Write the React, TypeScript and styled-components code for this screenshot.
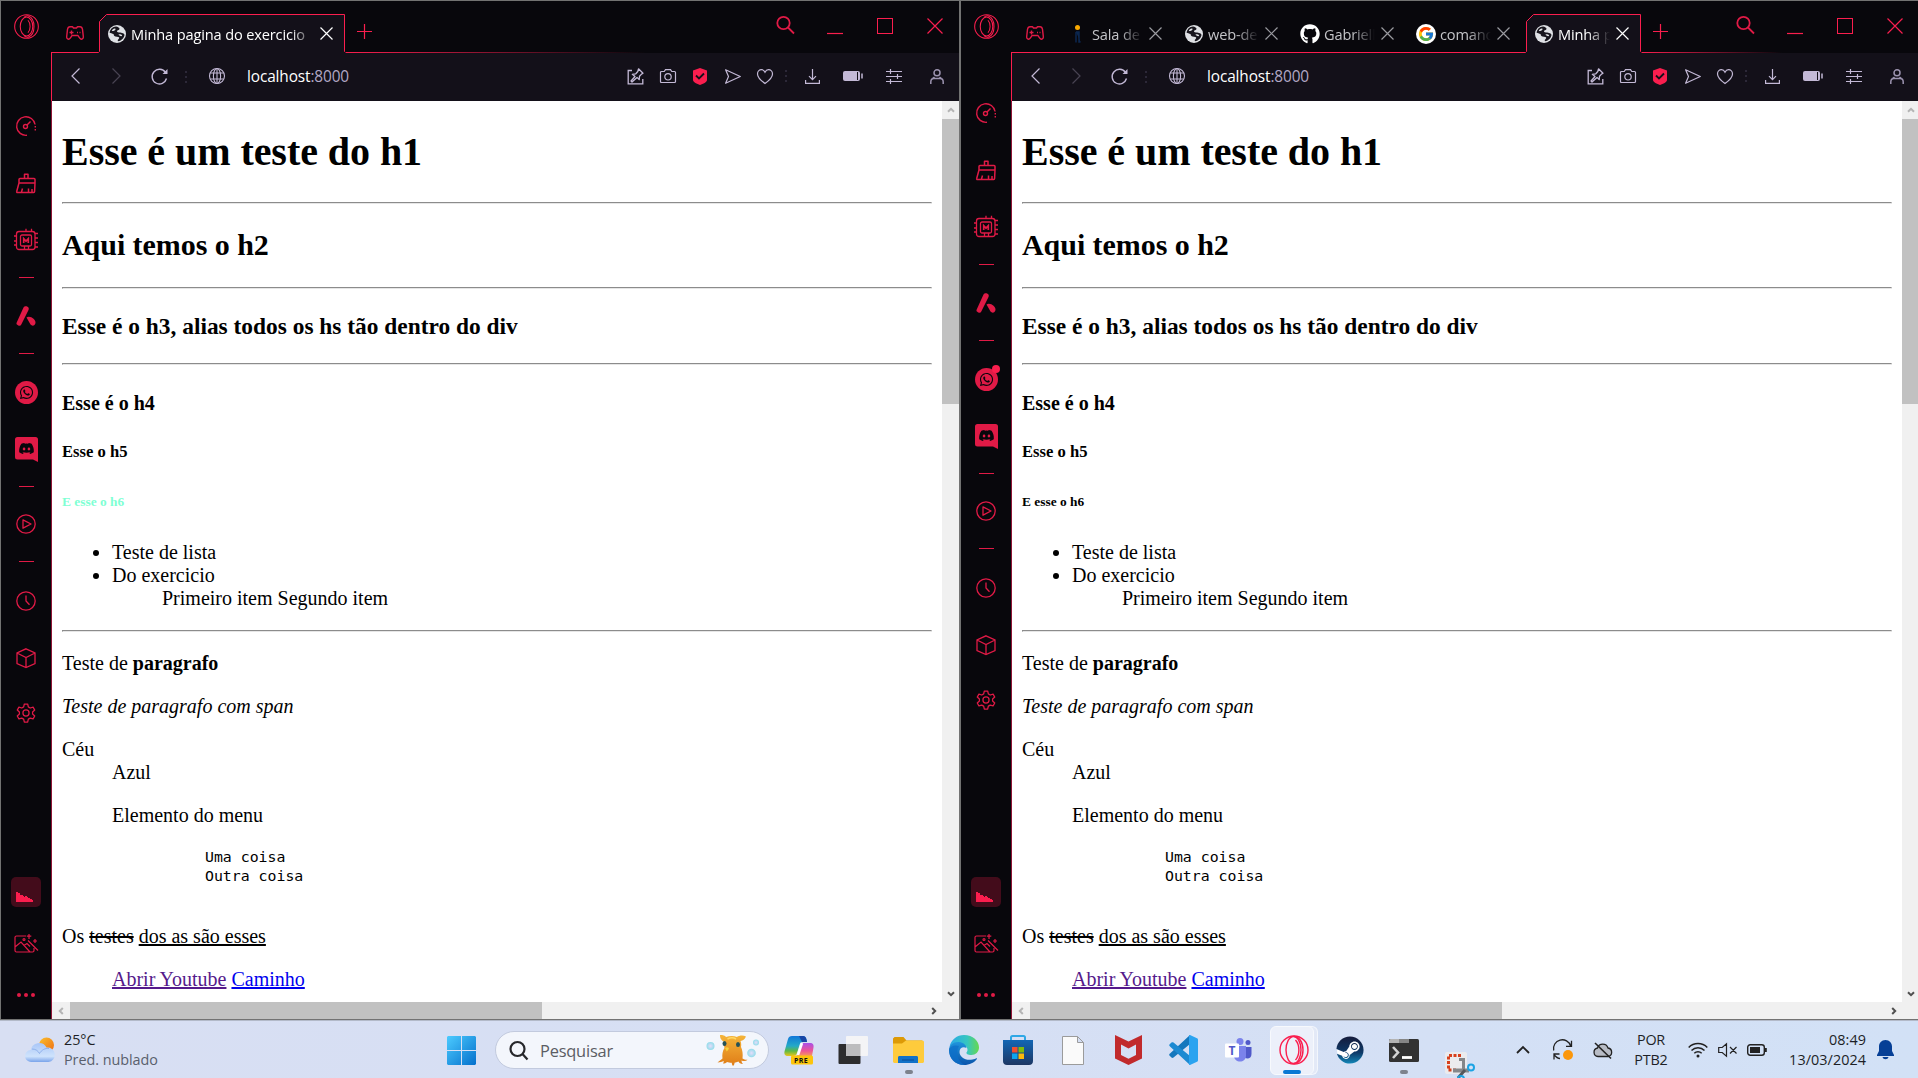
import React from 'react';
import styled, { createGlobalStyle } from 'styled-components';
import { FaDiscord, FaWhatsapp, FaGithub, FaSteam } from 'react-icons/fa6';
import { FcGoogle } from 'react-icons/fc';

const RED = '#fa1e4e';
const SIDE_RED = '#e01a46';
const LILAC = '#c3b9d6';
const UI = '"Open Sans", "Noto Sans", sans-serif';

const GlobalStyle = createGlobalStyle`
  * { box-sizing: border-box; }
  html, body { margin: 0; padding: 0; overflow: hidden; }
  body { font-family: ${UI}; }
  svg { display: block; flex: none; overflow: visible; }
`;

const Desktop = styled.div`
  width: 1918px;
  height: 1078px;
  overflow: hidden;
  display: flex;
  flex-direction: column;
  background: #d7dff3;
`;
const Windows = styled.div`
  display: grid;
  grid-template-columns: 960px 960px;
  height: 1020px;
  flex: none;
`;

/* ---------- browser window ---------- */
const WindowFrame = styled.section`
  display: grid;
  grid-template-columns: 50px 908px;
  width: 960px;
  height: 1020px;
  border: 1px solid #727272;
  background: #08070c;
  overflow: hidden;
`;
const Sidebar = styled.nav<{ $top: number }>`
  display: flex;
  flex-direction: column;
  align-items: center;
  height: 1018px;
  padding-top: 13px;
  & > .spacer { height: ${p => p.$top}px; flex: none; }
`;
const SideItem = styled.div<{ $h: number }>`
  height: ${p => p.$h}px;
  width: 50px;
  flex: none;
  display: flex;
  align-items: center;
  justify-content: center;
  color: ${SIDE_RED};
  position: relative;
`;
const SideDash = styled.div`
  width: 15px;
  height: 1px;
  background: ${SIDE_RED};
`;
const Push = styled.div`flex: 1;`;
const CornerBox = styled.div`
  width: 30px;
  height: 30px;
  border-radius: 5px;
  background: #430c1b;
  display: flex;
  align-items: flex-end;
  padding: 0 0 5px 5px;
`;
const WhatsDisc = styled.div`
  width: 23px;
  height: 23px;
  border-radius: 50%;
  background: ${SIDE_RED};
  color: #08070c;
  display: flex;
  align-items: center;
  justify-content: center;
`;
const Notice = styled.i`
  position: absolute;
  right: 11px;
  top: 17px;
  width: 8px;
  height: 8px;
  border-radius: 50%;
  background: ${RED};
`;
const Main = styled.div`
  display: flex;
  flex-direction: column;
  width: 908px;
`;
const TabBar = styled.div`
  display: flex;
  height: 52px;
  flex: none;
`;
const LineCell = styled.div<{ $w?: number; $line?: string }>`
  width: ${p => (p.$w ? p.$w + 'px' : 'auto')};
  flex: ${p => (p.$w ? 'none' : 1)};
  height: 52px;
  display: flex;
  background: ${p => p.$line || `linear-gradient(${RED}, ${RED})`} 0 51px / 100% 1px no-repeat;
`;
const PadIcon = styled.div`
  padding: 25px 0 0 15px;
`;
const PlusBox = styled.div`
  padding: 23px 0 0 11px;
  flex: 1;
`;
const TabBox = styled.div<{ $w: number; $active: boolean }>`
  width: ${p => p.$w}px;
  height: 52px;
  flex: none;
  display: flex;
  align-items: center;
  padding: 13px ${p => (p.$active ? 10 : 13)}px 0 ${p => (p.$w > 200 || p.$active ? 9 : 7)}px;
  position: relative;
  color: ${p => (p.$active ? '#fff' : '#c4c4c8')};
  background: ${p => (p.$active ? 'none' : `linear-gradient(${RED}, ${RED}) 0 51px / 100% 1px no-repeat`)};
`;
const Outline = styled.svg`
  position: absolute;
  left: 0;
  top: 13px;
`;
const FavSlot = styled.span`
  width: 20px;
  margin-left: -1px;
  display: flex;
  justify-content: center;
  position: relative;
`;
const TabTitle = styled.span`
  flex: 1;
  min-width: 0;
  margin: 0 1px 0 4px;
  overflow: hidden;
  white-space: nowrap;
  position: relative;
  font-size: 14.6px;
  line-height: 22px;
  letter-spacing: -0.15px;
  mask-image: linear-gradient(90deg, #000 calc(100% - 25px), transparent calc(100% - 2px));
`;
const Controls = styled.div`
  display: flex;
  width: 183px;
  flex: none;
  color: ${RED};
`;
const Control = styled.div<{ $w: number; $t: number; $gap?: number }>`
  width: ${p => p.$w}px;
  flex: none;
  margin-left: ${p => p.$gap || 0}px;
  padding-top: ${p => p.$t}px;
  display: flex;
  justify-content: center;
  align-items: flex-start;
`;
const Toolbar = styled.div`
  display: flex;
  height: 48px;
  flex: none;
  background: #131019;
  border-left: 1px solid ${RED};
  color: ${LILAC};
  align-items: center;
`;
const ToolCell = styled.div<{ $w: number; $dim?: boolean }>`
  width: ${p => p.$w}px;
  height: 48px;
  padding-bottom: 2px;
  flex: none;
  display: flex;
  align-items: center;
  justify-content: center;
  opacity: ${p => (p.$dim ? 0.3 : 1)};
`;
const Dots = styled.div`
  width: 2px;
  height: 13px;
  flex: none;
  background: repeating-linear-gradient(#2c2838 0 2px, transparent 2px 5px);
`;
const Address = styled.div`
  flex: 1;
  font-size: 15.4px;
  line-height: 22px;
  padding: 0 0 0 1px;
  letter-spacing: -0.12px;
  color: #b1a7c4;
  b { font-weight: 400; color: #fff; }
`;
const View = styled.div`
  display: grid;
  grid-template-columns: 890px 17px;
  grid-template-rows: 901px 17px;
  border-left: 1px solid #8e1535;
  background: #fff;
`;
const BarV = styled.div`
  background: #f0f0f0;
  display: flex;
  flex-direction: column;
`;
const BarH = styled.div`
  background: #f0f0f0;
  display: flex;
`;
const ArrowBox = styled.div<{ $dim?: boolean; $w: number; $h: number }>`
  width: ${p => p.$w}px;
  height: ${p => p.$h}px;
  display: flex;
  align-items: center;
  justify-content: center;
  color: ${p => (p.$dim ? '#b4b4b4' : '#505050')};
`;
const Thumb = styled.div<{ $w: number; $h: number }>`
  width: ${p => p.$w}px;
  height: ${p => p.$h}px;
  background: #c1c1c1;
`;

/* ---------- web page ---------- */
const Page = styled.article<{ $h6: string }>`
  display: flow-root;
  font-family: "Liberation Serif", "Times New Roman", serif;
  font-size: 20px;
  line-height: normal;
  color: #000;
  padding: 0 10px;
  height: 901px;
  overflow: hidden;
  h1 { font-size: 40px; margin: 26.8px 0; letter-spacing: -0.05px; }
  h2 { font-size: 30px; margin: 24.9px 0; letter-spacing: -0.05px; }
  h3 { font-size: 23.4px; margin: 23.4px 0; }
  h4 { font-size: 20px; margin: 26.6px 0; }
  h5 { font-size: 16.6px; margin: 27.7px 0; }
  h6 { font-size: 13.4px; margin: 31.2px 0; color: ${p => p.$h6}; }
  hr { margin: 10px 0; border: 1px solid; border-color: #8c8c8c #e6e6e6 #e6e6e6 #8c8c8c; }
  ul, ul ul { margin: 0; padding-left: 50px; }
  & > ul { margin: 20px 0; }
  p { margin: 20px 0; }
  dl { margin: 20px 0; }
  dd { margin: 0 0 0 50px; }
  menu { margin: 20px 0; padding-left: 50px; }
  pre {
    margin: 21px 0 20px 43px;
    padding-left: 50px;
    font: 14.85px/19px "DejaVu Sans Mono", monospace;
  }
  u, s, a { text-decoration-thickness: 2px; }
`;
const Link = styled.a<{ $visited?: boolean }>`
  color: ${p => (p.$visited ? '#551a8b' : '#0000ee')};
  text-decoration: underline;
`;

/* ---------- taskbar ---------- */
const Taskbar = styled.footer`
  height: 58px;
  flex: none;
  display: flex;
  align-items: center;
  padding-top: 2px;
  background: linear-gradient(90deg, #d8dff3, #d6dff4 50%, #d2e1f6);
  box-shadow: inset 0 1px #b3bac9;
  color: #1d1f26;
`;
const Weather = styled.div`
  width: 447px;
  flex: none;
  display: flex;
  align-items: center;
  padding-left: 25px;
  gap: 8px;
`;
const Stack = styled.div<{ $align?: string; $w?: number; $ls?: number }>`
  display: flex;
  flex-direction: column;
  text-align: ${p => p.$align || 'left'};
  width: ${p => (p.$w ? p.$w + 'px' : 'auto')};
  flex: none;
  font-size: 14.4px;
  line-height: 20px;
  letter-spacing: ${p => p.$ls || 0}px;
  white-space: nowrap;
  em { font-style: normal; color: #5a5f6d; }
`;
const Search = styled.div`
  width: 274px;
  height: 38px;
  flex: none;
  margin: 0 0 0 19px;
  border-radius: 19px;
  background: #f3f6fc;
  border: 1px solid #c2cade;
  display: flex;
  align-items: center;
  padding: 0 8px 0 13px;
  font-size: 16.4px;
  letter-spacing: -0.2px;
  color: #5b5d64;
  span { flex: 1; padding-left: 12px; }
`;
const TaskCell = styled.div<{ $w: number }>`
  width: ${p => p.$w}px;
  height: 58px;
  flex: none;
  display: flex;
  align-items: center;
  justify-content: center;
  position: relative;
`;
const Mark = styled.i<{ $on?: boolean }>`
  position: absolute;
  top: 49px;
  left: 50%;
  width: ${p => (p.$on ? 18 : 8)}px;
  height: 4px;
  margin-left: ${p => (p.$on ? -11 : -4)}px;
  border-radius: 2px;
  background: ${p => (p.$on ? '#0a78d4' : '#7d828d')};
`;
const ActiveTile = styled.div`
  width: 44px;
  height: 49px;
  margin-right: 4px;
  border-radius: 6px;
  background: #ecf0fa;
  border: 1px solid #f7f9fd;
  box-shadow: 4px 0 0 -1px #e3e9f7, 4px 0 0 0 #f3f6fc;
  display: flex;
  align-items: center;
  justify-content: center;
  padding-left: 3px;
`;
const Snip = styled.div`
  padding: 32px 0 0 1px;
`;
const Tray = styled.div`
  display: flex;
  align-items: center;
  margin-left: 14px;
`;

/* ---------- icons ---------- */
type SvgProps = { w: number; h?: number; vb?: string; sw?: number; c?: string; children: React.ReactNode };
const Ico = ({ w, h = w, vb, sw = 1.2, c = 'currentColor', children }: SvgProps) => (
  <svg width={w} height={h} viewBox={vb || `0 0 ${w} ${h}`} fill="none" stroke={c} strokeWidth={sw}>
    {children}
  </svg>
);

const OperaRing = ({ s, sw = 1.1 }: { s: number; sw?: number }) => (
  <Ico w={s} vb="0 0 26 26" sw={sw} c={RED}>
    <circle cx="13" cy="13" r="12.300" />
    <ellipse cx="13" cy="13" rx="6.500" ry="9.800" />
    <path d="M10.500 3.500C12 2 13.500 1.500 15 2c3.500 1.300 5.800 5.500 5.800 11S18.500 22.700 15 24c-1.500.5-3 0-4.500-1.500M14.500 6.500c3 3 3 10 0 13" />
  </Ico>
);
const OperaTask = () => (
  <Ico w={30} vb="0 0 30 30" sw={1.4} c={RED}>
    <circle cx="15" cy="15" r="14" />
    <ellipse cx="14.500" cy="15" rx="7.500" ry="13.500" />
    <path d="M15 1.500c5 0 9 5.500 9 13.500s-4 13.500-9 13.500M16.500 5c4.500 5 4.500 15 0 20" />
  </Ico>
);
const Gauge = () => (
  <Ico w={20} sw={1.4}>
    <path d="M11 19.300A9.300 9.300 0 1 1 19.100 8.500" />
    <path d="M19.300 10v6" strokeDasharray="1.500 1.500" />
    <circle cx="9.500" cy="10.500" r="2" />
    <path d="m11 9 3.500-3.500" />
  </Ico>
);
const Broom = () => (
  <Ico w={20} sw={1.5}>
    <path strokeLinejoin="round" d="M8.500 5.500V1.200h3.500v4.300M3 10V6.500c0-.7.3-1 1-1h14c.7 0 1 .3 1 1V10M3 10h16l-.4 8.500c0 .7-.4 1-1 1H1.500c-.7 0-1-.4-.8-1zM5.500 19l1-3.500M12.500 19v-3.500M16 19v-3" />
  </Ico>
);
const Chip = () => (
  <Ico w={24} sw={1.3}>
    <rect x="2.500" y="3.500" width="18.500" height="18" rx="2.500" />
    <rect x="6.500" y="7" width="11" height="11" rx="1.500" />
    <path d="M9.700 15v-4.300l2.300 2.500 2.300-2.500V15" strokeWidth="1.700" />
    <path d="M12 .8v3M17.500.8v3M0 8h3M0 13h3M0 17h3M21 5.500h3M21 10h3M21 14.500h3M21 19h3M10.500 18v3.500M14.500 18v3.500" />
  </Ico>
);
const AShape = () => (
  <Ico w={20} sw={0}>
    <path fill="currentColor" d="M7.500 1.500C8.300.2 10 0 11.500.700c1.300.7 1.600 1.900 1 3.300L5.300 18.500c-.6 1.200-1.600 1.600-3 .9C.7 18.700 0 17.800.7 16.500zM10.500 11.500c3.500-2.300 9.500 1.800 9 5.500-.4 2.400-3.200 3.700-5 1.500z" />
  </Ico>
);
const Play = () => (
  <Ico w={20} sw={1.3}>
    <circle cx="10" cy="10" r="9.200" />
    <path d="m7 5.800 8 4.200-8 4.200z" strokeLinejoin="round" />
  </Ico>
);
const Clock = () => (
  <Ico w={20} sw={1.3}>
    <circle cx="10" cy="10" r="9.200" />
    <path d="M10 4.500V10l3.500 3.800" />
  </Ico>
);
const Cube = () => (
  <Ico w={20} sw={1.3}>
    <path d="M10 .8 19 5v10.500L10 19.600 1 15.500V5zM1 5l9 4.500L19 5M10 9.500v10" />
  </Ico>
);
const Gear = () => (
  <Ico w={20} vb="0 0 24 24" sw={1.5}>
    <path strokeLinejoin="round" d="M10 1.200h4l.8 3.500 2.300 1.300 3.400-1 2 3.500-2.600 2.400v2.300l2.600 2.400-2 3.500-3.400-1-2.300 1.300-.8 3.400h-4l-.8-3.400-2.300-1.300-3.400 1-2-3.500 2.600-2.400v-2.300L1.500 8.500l2-3.500 3.400 1 2.300-1.300z" />
    <circle cx="12" cy="12" r="3.700" />
  </Ico>
);
const MagicImage = () => (
  <Ico w={24} h={20} sw={1.2}>
    <path d="M12 3H2.500C1.500 3 1 3.500 1 4.500v13c0 1 .5 1.500 1.500 1.500h16c1 0 1.500-.5 1.500-1.500V15M1 14l6-5 9 10M10 12.500l3-2 3 3" />
    <circle cx="10" cy="6.500" r="1" />
    <path d="M14 7.500 24 17.500M15 1v5M12.800 3.200h4.500M21 6v4M19 8h4" />
  </Ico>
);
const DiscordTile = () => (
  <svg width="23" height="25" viewBox="0 0 23 25">
    <path fill={SIDE_RED} d="M2.500 0h18A2.500 2.500 0 0 1 23 2.500V25l-5-2.500H2.500A2.500 2.500 0 0 1 0 20V2.500A2.500 2.500 0 0 1 2.500 0z" />
    <FaDiscord x="3.500" y="3.500" size={16} color="#08070c" />
  </svg>
);
const Gamepad = () => (
  <Ico w={18} h={14} sw={1.4} c={SIDE_RED}>
    <path d="M4 .8h2.500l1 1.200h3l1-1.200H14c1.500 0 2.200 1 2.500 2.500l.8 7c.2 1.800-.6 2.900-1.800 2.900-1.300 0-2-1.200-3.500-3.700H6C4.500 12 3.800 13.200 2.500 13.200 1.300 13.200.5 12.100.7 10.300l.8-7C1.800 1.800 2.500.8 4 .8z" strokeLinejoin="round" />
    <path d="M3.500 6.500h4M5.500 4.500v4M11 6.500h1M13.500 6.500h1" />
  </Ico>
);
const Cross = ({ s, c, sw = 1.2 }: { s: number; c?: string; sw?: number }) => (
  <Ico w={s} sw={sw} c={c}>
    <path d={`M.5.5 ${s - 0.5} ${s - 0.5}M${s - 0.5}.5.5 ${s - 0.5}`} />
  </Ico>
);
const EarthFav = () => (
  <svg width="18" height="18" viewBox="0 0 18 18">
    <circle cx="9" cy="9" r="9" fill="#dfe1e5" />
    <path fill="#17151d" d="M8 1.500c2 .3 3.500 1.300 3.500 2.300 0 1.200-1.500 1.200-2.300 2-.7.700.1 1.500 1.800 1.600 3 .2 5.500.600 5.500 2.600-.7 3.500-3.500 6-6.500 6.300-.8-1 .3-2 1-2.800.8-1-.3-1.700-2-1.700-2.500 0-3.300-1-3.300-2.500C4.200 8.500 2.500 8 1.500 7.500 2.200 4.200 4.500 1.800 8 1.500z" />
    <path fill="#dfe1e5" d="M7 3.500c1 .2.500 1.500-.5 2S4.300 6.300 3.800 6C4.200 4.500 5.700 3.300 7 3.500zM11 9.200c1.700 0 3 .4 3.200 1.200-.5 1.200-1.700.8-2.400.3-.8-.4-1.800-1.300-.8-1.500z" />
  </svg>
);
const InfoFav = () => (
  <svg width="18" height="20" viewBox="0 0 18 20">
    <circle cx="8.500" cy="3.500" r="2.500" fill="#f9a800" />
    <path d="M7 8h3v10h1.500M7 8v10.500" stroke="#0b2750" strokeWidth="1.500" fill="#0b2750" />
  </svg>
);
const GitFav = () => <FaGithub size={20} color="#fff" />;
const GoogleFav = () => (
  <svg width="20" height="20" viewBox="0 0 20 20">
    <circle cx="10" cy="10" r="10" fill="#fff" />
    <FcGoogle x="1.500" y="1.500" size={17} />
  </svg>
);

type ArrowDir = 'up' | 'down' | 'left' | 'right';
const rot: Record<ArrowDir, number> = { up: 0, right: 90, down: 180, left: 270 };
const Chevron = ({ dir }: { dir: ArrowDir }) => (
  <svg width="8" height="8" viewBox="0 0 8 8">
    <path transform={`rotate(${rot[dir]} 4 4)`} d="M1 5.800 4 2.800l3 3" fill="none" stroke="currentColor" strokeWidth="2" />
  </svg>
);

/* ---------- window parts ---------- */
type TabInfo = { title: string; icon: React.ReactNode; width: number; active?: boolean };

const Tab = ({ title, icon, width, active = false }: TabInfo) => (
  <TabBox $w={width} $active={active}>
    {active && (
      <Outline width={width} height={39} viewBox={`0 0 ${width} 39`}>
        <path d={`M-1 39V38.500H.5V7.500L7.500.500H${width - 1.5}V38.500H${width}V39z`} fill="#131019" />
        <path
          d={`M-.5 38.500L.5 37.500V7.500L7.500.500H${width - 1.5}V37.500L${width - 0.5} 38.500`}
          fill="none"
          stroke={RED}
        />
      </Outline>
    )}
    <FavSlot>{icon}</FavSlot>
    <TabTitle>{title}</TabTitle>
    <FavSlot>
      <Cross s={13} c={active ? '#fff' : '#9a9aa0'} />
    </FavSlot>
  </TabBox>
);

const SideIcons = ({ top, notice }: { top: number; notice: boolean }) => (
  <Sidebar $top={top}>
    <OperaRing s={25} />
    <div className="spacer" />
    <SideItem $h={57}><Gauge /></SideItem>
    <SideItem $h={57}><Broom /></SideItem>
    <SideItem $h={58}><Chip /></SideItem>
    <SideItem $h={17}><SideDash /></SideItem>
    <SideItem $h={60}><AShape /></SideItem>
    <SideItem $h={15}><SideDash /></SideItem>
    <SideItem $h={62}>
      <WhatsDisc><FaWhatsapp size={15} /></WhatsDisc>
      {notice && <Notice />}
    </SideItem>
    <SideItem $h={52}><DiscordTile /></SideItem>
    <SideItem $h={22}><SideDash /></SideItem>
    <SideItem $h={54}><Play /></SideItem>
    <SideItem $h={21}><SideDash /></SideItem>
    <SideItem $h={57}><Clock /></SideItem>
    <SideItem $h={57}><Cube /></SideItem>
    <SideItem $h={54}><Gear /></SideItem>
    <Push />
    <SideItem $h={50}>
      <CornerBox>
        <svg width="18" height="10" viewBox="0 0 18 10">
          <path fill={RED} d="M0 0h2v1h2v2h3v1h1v1h1V4h2v1h1v1h2v1h2v1h1v2H0z" />
        </svg>
      </CornerBox>
    </SideItem>
    <SideItem $h={52}><MagicImage /></SideItem>
    <SideItem $h={50}>
      <svg width="18" height="6" viewBox="0 0 18 6" fill={SIDE_RED}>
        <circle cx="2" cy="4" r="2" /><circle cx="9" cy="4" r="2" /><circle cx="16" cy="4" r="2" />
      </svg>
    </SideItem>
  </Sidebar>
);

const NavTools = () => (
  <Toolbar>
    <ToolCell $w={47}><Ico w={9} h={16}><path d="M8.500.5 1 8l7.500 7.500" /></Ico></ToolCell>
    <ToolCell $w={34} $dim><Ico w={9} h={16}><path d="M.5.5 8 8 .5 15.500" /></Ico></ToolCell>
    <ToolCell $w={52}>
      <Ico w={17} sw={1.4}>
        <path d="M15.500 10.500A7.300 7.300 0 1 1 14.500 4.500" />
        <path d="M16.500 1v5h-5z" fill="currentColor" stroke="none" />
      </Ico>
    </ToolCell>
    <Dots />
    <ToolCell $w={59}>
      <Ico w={16} sw={1.1}>
        <circle cx="8" cy="8" r="7.500" />
        <ellipse cx="8" cy="8" rx="3.600" ry="7.500" />
        <path d="M8 .5v15M1.200 5h13.600M1.200 11h13.600" />
      </Ico>
    </ToolCell>
    <Address><b>localhost</b>:8000</Address>
    <ToolCell $w={32}>
      <Ico w={17} sw={1.3}>
        <path d="M5 2.500H1.200v13.300h14.600V11" />
        <path d="m11.500.8 4.500 4.500-1.500.8-2 2.200-.3 3.300-2.200-2.200L5 14l-1-1 4-4.500-2.700-2.200 3.500-.5 2-2.300z" strokeLinejoin="round" />
      </Ico>
    </ToolCell>
    <ToolCell $w={33}>
      <Ico w={16} h={14} sw={1.2}>
        <path d="M1.500 2.500h2.700L5.500.600h5l1.300 1.900h2.700c.6 0 1 .3 1 1v9c0 .6-.4 1-1 1h-13c-.6 0-1-.4-1-1v-9c0-.7.400-1 1-1z" />
        <circle cx="8" cy="7.800" r="3.200" />
      </Ico>
    </ToolCell>
    <ToolCell $w={32}>
      <svg width="14" height="17" viewBox="0 0 14 17">
        <path fill={RED} d="M7 0l7 2.500V12c0 2-4 4-7 5-3-1-7-3-7-5V2.500z" />
        <path d="m3 7.500 3 3 5-5" fill="none" stroke="#131019" strokeWidth="1.800" />
      </svg>
    </ToolCell>
    <ToolCell $w={33}><Ico w={16} h={15}><path d="M.6.8 15.300 7.500.600 14.200 3.500 7.500z" strokeLinejoin="round" /></Ico></ToolCell>
    <ToolCell $w={31}>
      <Ico w={16} h={15}><path d="M8 14.500C4.500 12 .5 8.500.5 5 .5 2.500 2.300.7 4.500.7 6 .7 7.300 1.800 8 3.200 8.700 1.800 10 .7 11.500.7c2.200 0 4 1.800 4 4.300 0 3.500-4 7-7.500 9.500z" /></Ico>
    </ToolCell>
    <ToolCell $w={11}><Dots /></ToolCell>
    <ToolCell $w={42}>
      <Ico w={15} h={15}><path d="M7.500 0v10.500M4 7.200l3.500 3.500L11 7.200M.6 11v3.300h13.800V11" /></Ico>
    </ToolCell>
    <ToolCell $w={40}>
      <svg width="20" height="10" viewBox="0 0 20 10">
        <rect width="17" height="10" rx="2" fill={LILAC} />
        <path d="M14.500 1v8" stroke="#131019" />
        <path d="M19 2.500v5" stroke={LILAC} strokeWidth="1.500" />
      </svg>
    </ToolCell>
    <ToolCell $w={42}>
      <Ico w={16} h={15}><path d="M0 2.500h16M0 7.500h16M0 12.500h16M4.500 0v5M11.500 5v5M4.500 10v5" /></Ico>
    </ToolCell>
    <ToolCell $w={44}>
      <Ico w={14} h={15} sw={1.5} c="#9d94b0">
        <circle cx="7" cy="3.800" r="3" />
        <path d="M.8 15v-2c0-2 1.200-3.500 3-3.500h6.400c1.800 0 3 1.500 3 3.500v2M2.500 9.500l2-1.500M11.500 9.500l-2-1.500" />
      </Ico>
    </ToolCell>
  </Toolbar>
);

const WebPage = ({ h6 }: { h6: string }) => (
  <Page $h6={h6}>
    <h1>Esse é um teste do h1</h1>
    <hr />
    <h2>Aqui temos o h2</h2>
    <hr />
    <h3>Esse é o h3, alias todos os hs tão dentro do div</h3>
    <hr />
    <h4>Esse é o h4</h4>
    <h5>Esse o h5</h5>
    <h6>E esse o h6</h6>
    <ul>
      <li>Teste de lista</li>
      <li>
        Do exercicio
        <ul>Primeiro item Segundo item</ul>
      </li>
    </ul>
    <hr />
    <p>Teste de <b>paragrafo</b></p>
    <p><i>Teste de paragrafo com span</i></p>
    <dl>
      <dt>Céu</dt>
      <dd>Azul</dd>
    </dl>
    <menu>Elemento do menu</menu>
    <menu>
      <pre>{'Uma coisa\nOutra coisa\n '}</pre>
    </menu>
    <p>Os <s>testes</s> <u>dos as são esses</u></p>
    <menu>
      <Link $visited>Abrir Youtube</Link> <Link>Caminho</Link>
    </menu>
  </Page>
);

type BrowserProps = { tabs: TabInfo[]; sideTop: number; notice?: boolean; h6: string; fade: number };
const Browser = ({ tabs, sideTop, notice = false, h6, fade }: BrowserProps) => (
  <WindowFrame>
    <SideIcons top={sideTop} notice={notice} />
    <Main>
      <TabBar>
        <LineCell $w={tabs.length > 1 ? 51 : 48}><PadIcon><Gamepad /></PadIcon></LineCell>
        {tabs.map((t, i) => <Tab key={i} {...t} />)}
        <LineCell $line={`linear-gradient(90deg, ${RED}, ${RED}00 ${fade}px)`}>
          <PlusBox><Ico w={15} c={RED}><path d="M7.500 0v15M0 7.500h15" /></Ico></PlusBox>
          <Controls>
            <Control $w={18} $t={15}>
              <Ico w={18} sw={1.8} c={SIDE_RED}><circle cx="7.500" cy="7" r="6.200" /><path d="m12 11.500 6 6" /></Ico>
            </Control>
            <Control $w={50} $t={32} $gap={16}><Ico w={16} h={1}><path d="M0 .5h16" /></Ico></Control>
            <Control $w={50} $t={17}><Ico w={16} sw={1}><rect x=".5" y=".5" width="15" height="15" /></Ico></Control>
            <Control $w={49} $t={17}><Cross s={16} c={RED} /></Control>
          </Controls>
        </LineCell>
      </TabBar>
      <NavTools />
      <View>
        <WebPage h6={h6} />
        <BarV>
          <ArrowBox $w={17} $h={18} $dim><Chevron dir="up" /></ArrowBox>
          <Thumb $w={17} $h={285} />
          <Push />
          <ArrowBox $w={17} $h={17}><Chevron dir="down" /></ArrowBox>
        </BarV>
        <BarH>
          <ArrowBox $w={18} $h={17} $dim><Chevron dir="left" /></ArrowBox>
          <Thumb $w={472} $h={17} />
          <Push />
          <ArrowBox $w={17} $h={17}><Chevron dir="right" /></ArrowBox>
        </BarH>
        <BarH />
      </View>
    </Main>
  </WindowFrame>
);

/* ---------- taskbar artwork ---------- */
const WeatherIcon = () => (
  <svg width="31" height="26" viewBox="0 0 31 26">
    <defs>
      <linearGradient id="wsun" x1="0" y1="0" x2="1" y2="1"><stop stopColor="#fbc02d" /><stop offset="1" stopColor="#ee6c12" /></linearGradient>
      <linearGradient id="wcl" x1="0" y1="0" x2="0" y2="1"><stop stopColor="#a9c6f7" /><stop offset=".7" stopColor="#cfe3fc" /><stop offset="1" stopColor="#79a3ea" /></linearGradient>
    </defs>
    <circle cx="21.500" cy="8" r="7.500" fill="url(#wsun)" />
    <path d="M6.500 25a6 6 0 0 1-.8-12A8.500 8.500 0 0 1 21.500 10.500 7.300 7.300 0 1 1 23.500 25z" fill="url(#wcl)" />
    <path d="M7 12c4 0 6 2 7.500 4.500C16.500 13 20 11 24 11.500" stroke="#7ba0e4" fill="none" opacity=".7" />
  </svg>
);
const WinLogo = () => (
  <svg width="29" height="29" viewBox="0 0 29 29">
    <defs><linearGradient id="win" x1="0" y1="0" x2="1" y2="1"><stop stopColor="#4ccbff" /><stop offset="1" stopColor="#0470cc" /></linearGradient></defs>
    <path fill="url(#win)" d="M1 0h13v14H0V1zM15 0h13l1 1v13H15zM0 15h14v14H1l-1-1zM15 15h14v13l-1 1H15z" />
  </svg>
);
const Creature = () => (
  <svg width="54" height="32" viewBox="0 0 54 32">
    <defs>
      <linearGradient id="cr" x1="0" y1="0" x2="0" y2="1"><stop stopColor="#f5b53a" /><stop offset="1" stopColor="#df7c17" /></linearGradient>
      <radialGradient id="bub"><stop stopColor="#e6dcfa" /><stop offset="1" stopColor="#91dcea" /></radialGradient>
    </defs>
    <circle cx="4.500" cy="12" r="4" fill="url(#bub)" /><circle cx="45.500" cy="19" r="4.300" fill="url(#bub)" /><circle cx="50" cy="8.500" r="3" fill="url(#bub)" />
    <path
      fill="url(#cr)"
      d="M14 1c3 0 5 .5 6 2 3.500-1.500 8-1.500 11 0 2-1.500 6-2 9-.5-1.500 3-3 4-5.500 4.500.8 2 .9 4 .5 6 1.500 3 2 7 1.500 11.500 1.500.8 3 1.500 5 1.300-1.500 1.500-3.500 1.700-6 .700 0 1.500.500 2.500 1.500 3.500-2.500 0-4-1-4.500-2.500-1.500.5-3 .8-4 1.200 0 1.300-.3 2.300-1.500 3.300-.8-1-1-2-1.300-3.300-2 0-3.500-.3-4.700-.7-1 1-2.300 1.500-4 1.500.5-.8.800-1.500.8-2.500-1.800.5-3.800 1.500-6.300 1.500 1.500-1.500 3.500-2.500 5-4-.5-4 0-7.500 2-10.500-.6-2-.6-4 0-6.200C16 7 14 5 14 1z"
    />
    <ellipse cx="18.500" cy="9.500" rx="2" ry="2.600" fill="#255257" /><ellipse cx="32" cy="10.500" rx="2" ry="2.600" fill="#255257" />
    <path d="M19 14c2-1.500 4.300-.5 3.800 1L20.800 17.500z" fill="#f8d13c" /><path d="M21.500 5c3-1.500 6-1.500 8.500 0" stroke="#ffd865" strokeWidth="1.500" fill="none" />
  </svg>
);
const PreText = styled.text`
  font: 700 7px ${UI};
  letter-spacing: 0.4px;
`;
const Copilot = () => (
  <svg width="30" height="30" viewBox="0 0 30 30">
    <defs>
      <linearGradient id="c1" x1="0" y1="0" x2="0" y2="1"><stop stopColor="#1177d9" /><stop offset=".5" stopColor="#24a9c8" /><stop offset=".75" stopColor="#5fb944" /><stop offset="1" stopColor="#e9c51c" /></linearGradient>
      <linearGradient id="c2" x1="0" y1="0" x2="0" y2="1"><stop stopColor="#a950e8" /><stop offset=".6" stopColor="#ee5596" /><stop offset="1" stopColor="#f59a5b" /></linearGradient>
    </defs>
    <path fill="url(#c1)" d="M8 1h11c2 0 3 1.500 3.500 3.500L23 7h-4c-2 0-3 1-3.500 3L13 18c-.5 2-1.500 3-3.500 3H4c-3 0-4-2-3.500-4.500L4 4c.5-2 2-3 4-3z" />
    <path fill="url(#c2)" d="M18 8h8c3 0 4 2 3.500 4.500L28 21H12.500c1.500-1 2-2 2.500-4z" />
    <path d="M18 8 14 20" stroke="#fff" strokeWidth="2.500" /><path d="M15 1h4c2 0 3 1.500 3.500 3.500L23 7h-5z" fill="#1846a6" />
    <rect x="7" y="20.500" width="22" height="9" rx="1.500" fill="#fdc50b" />
    <PreText x="10" y="27.700" fill="#111">PRE</PreText>
  </svg>
);
const TaskView = () => (
  <svg width="30" height="28" viewBox="0 0 30 28">
    <rect x=".5" y="8" width="22" height="20" rx="1" fill="#2d2d2e" />
    <rect x="8" y="0" width="22" height="20" rx="1" fill="#f4f4f6" />
    <rect x="8" y="8" width="14.500" height="12" fill="#bcbcbe" />
  </svg>
);
const Explorer = () => (
  <svg width="31" height="28" viewBox="0 0 31 28">
    <path fill="#dd9a07" d="M1.500 1h9l3 3.500H29l1 1V13H0V2.500z" />
    <path fill="#fecb3c" d="M0 7.500h9l4-3h16.500l1.500 1V26l-1 1H1l-1-1z" />
    <path fill="#1172c9" d="M5 27v-5.500c0-1 .7-1.500 1.500-1.500h17c.8 0 1.500.500 1.500 1.500V27z" /><path d="M9 24h12" stroke="#0a4b94" />
  </svg>
);
const Edge = () => (
  <svg width="30" height="30" viewBox="0 0 30 30">
    <defs>
      <linearGradient id="e1"><stop stopColor="#2aa8e8" /><stop offset=".6" stopColor="#36c6c0" /><stop offset="1" stopColor="#66d84f" /></linearGradient>
      <linearGradient id="e2" x1="0" y1="0" x2="0" y2="1"><stop stopColor="#2094dc" /><stop offset="1" stopColor="#0a54ab" /></linearGradient>
    </defs>
    <path fill="url(#e1)" d="M.5 12C2 4.500 8 0 15 0c9 0 15 6 15 12.500 0 4.500-3.500 7.500-7.500 7.500-4 0-5.500-1.500-5-2.500 2-2.500 1-6-3-7.500C9 8 3 9 .5 12z" />
    <path fill="url(#e2)" d="M0 15C0 10 5 6.500 10 7c4.500.4 7 3 7.500 6-4-2-7 .500-7 4 0 5 6 9 13 7.500 1.500-.3 3-.8 4-1.300.5 0 .7.400.4.800C25.500 27.500 20.500 30 15 30 6.500 30 0 23.500 0 15z" />
    <path fill="#0d6fc9" d="M10 11c-4 6-1.500 16 6 18.900C7 30.500 0 24 0 15c1-4 6-5.500 10-4z" opacity=".7" />
  </svg>
);
const Store = () => (
  <svg width="30" height="30" viewBox="0 0 30 30">
    <defs><linearGradient id="st" x1="0" y1="0" x2="0" y2="1"><stop stopColor="#1266b4" /><stop offset="1" stopColor="#1d3764" /></linearGradient></defs>
    <path d="M8 6V2.500C8 1.500 8.500 1 9.500 1h11c1 0 1.500.5 1.500 1.500V6" fill="none" stroke="#2ea7e6" strokeWidth="2" />
    <path fill="url(#st)" d="M0 5h30v21c0 2.500-1.500 4-4 4H4c-2.500 0-4-1.500-4-4z" />
    <path fill="#f1502f" d="M9 12h5.500v5.500H9z" /><path fill="#80bb0a" d="M15.500 12H21v5.500h-5.500z" />
    <path fill="#0da5ee" d="M9 18.500h5.500V24H9z" /><path fill="#fdb90b" d="M15.500 18.500H21V24h-5.500z" />
  </svg>
);
const FileIcon = () => (
  <svg width="22" height="29" viewBox="0 0 22 29"><path d="M.5.5h15l6 6v22H.5zM15.500.5v6h6" fill="#fafafa" stroke="#9b9b9b" /></svg>
);
const McAfee = () => (
  <svg width="27" height="30" viewBox="0 0 27 30"><path fill="#c12a2c" d="M0 0l13.500 6.500L27 0v23.500L13.500 30 0 23.500zM6 9.500V20l7.500 3.800L21 20V9.500l-7.500 4z" fillRule="evenodd" /></svg>
);
const VsCode = () => (
  <svg width="30" height="30" viewBox="0 0 30 30">
    <path fill="#1477bd" d="M22 0 2 18.500c-1 .8-1 1.500-.3 2.200L3.500 22.500c.6.500 1.300.5 2 0L22 9z" />
    <path fill="#1c8ad2" d="M22 30 2 11.500c-1-.8-1-1.500-.3-2.200L3.500 7.500c.6-.5 1.300-.5 2 0L22 21z" />
    <path fill="#2aa3f0" d="M22 0l7 3.200c.7.300 1 .8 1 1.500v20.600c0 .7-.3 1.200-1 1.500L22 30c-.7 0-1-.5-1-1V1c0-.5.3-1 1-1z" />
  </svg>
);
const TeamsT = styled.text`font: 700 12px ${UI};`;
const Teams = () => (
  <svg width="27" height="24" viewBox="0 0 27 24">
    <circle cx="15" cy="3.500" r="3.500" fill="#7b83eb" /><circle cx="23" cy="4.500" r="2.500" fill="#5059c9" />
    <path fill="#5059c9" d="M19 9h7.500v7c0 3-2 4.500-4 4.500S19 19 19 17z" />
    <path fill="#7b83eb" d="M9 8h12v9.500c0 4-3 6-6 6s-6-2-6-6z" />
    <rect y="5.500" width="14" height="14" rx="1" fill="#fff" /><TeamsT x="3.500" y="17" fill="#5059c9">T</TeamsT>
  </svg>
);
const SteamGlyph = styled(FaSteam)`
  path { fill: url(#sm); }
`;
const Steam = () => (
  <svg width="28" height="28" viewBox="0 0 28 28">
    <defs><linearGradient id="sm" x1="0" y1="0" x2="0" y2="1"><stop stopColor="#151b3b" /><stop offset=".6" stopColor="#0e3a68" /><stop offset="1" stopColor="#1387b8" /></linearGradient></defs>
    <circle cx="14" cy="14" r="13" fill="#fff" />
    <SteamGlyph size={28} />
  </svg>
);
const Terminal = () => (
  <svg width="30" height="23" viewBox="0 0 30 23">
    <rect width="30" height="23" rx="1.500" fill="#323232" /><path fill="#858585" d="M1.500 0H20v4H0V1.500z" /><path fill="#b4b4b4" d="M0 4V1.500L1.500 0H10v4z" />
    <path d="m4 8 5 5.500L4 19" fill="none" stroke="#d2d2d2" strokeWidth="2.600" /><path d="M13 18.500h10" stroke="#fff" strokeWidth="2.800" />
  </svg>
);
const SnipIcon = () => (
  <svg width="30" height="28" viewBox="0 0 30 28">
    <rect width="22" height="22" rx="2" fill="#ebebee" />
    <path d="M16 3.500H3.500V18H11" fill="none" stroke="#d8401c" strokeWidth="3" strokeDasharray="3 1.500" />
    <path d="M14 6h6v11h-3V9h-3zM8 16.500h16v4H8z" fill="#85878a" /><path d="M20 18 13 26" stroke="#55585c" strokeWidth="3" />
    <circle cx="26" cy="15.500" r="3" fill="none" stroke="#1ba3e4" strokeWidth="2" /><circle cx="16" cy="27" r="3" fill="none" stroke="#1ba3e4" strokeWidth="2" />
  </svg>
);

const rightTabs: TabInfo[] = [
  { title: 'Sala de', icon: <InfoFav />, width: 116 },
  { title: 'web-de', icon: <EarthFav />, width: 116 },
  { title: 'Gabriell', icon: <GitFav />, width: 116 },
  { title: 'comand', icon: <GoogleFav />, width: 116 },
  { title: 'Minha p', icon: <EarthFav />, width: 116, active: true },
];

export default function App() {
  return (
    <Desktop>
      <GlobalStyle />
      <Windows>
        <Browser
          tabs={[{ title: 'Minha pagina do exercicio', icon: <EarthFav />, width: 247, active: true }]}
          sideTop={58}
          h6="#7fffd4"
          fade={300}
        />
        <Browser tabs={rightTabs} sideTop={45} notice h6="#000" fade={140} />
      </Windows>
      <Taskbar>
        <Weather>
          <WeatherIcon />
          <Stack $ls={-0.05}>
            <span>25°C</span>
            <em>Pred. nublado</em>
          </Stack>
        </Weather>
        <WinLogo />
        <Search>
          <Ico w={19} sw={2.2} c="#26272b"><circle cx="8.500" cy="8" r="7" /><path d="m13.500 13 5 5.500" /></Ico>
          <span>Pesquisar</span>
          <Creature />
        </Search>
        <TaskCell $w={59}><Copilot /></TaskCell>
        <TaskCell $w={50}><TaskView /></TaskCell>
        <TaskCell $w={61}><Explorer /><Mark /></TaskCell>
        <TaskCell $w={49}><Edge /></TaskCell>
        <TaskCell $w={60}><Store /></TaskCell>
        <TaskCell $w={50}><FileIcon /></TaskCell>
        <TaskCell $w={60}><McAfee /></TaskCell>
        <TaskCell $w={50}><VsCode /></TaskCell>
        <TaskCell $w={60}><Teams /></TaskCell>
        <TaskCell $w={52}><ActiveTile><OperaTask /></ActiveTile><Mark $on /></TaskCell>
        <TaskCell $w={59}><Steam /></TaskCell>
        <TaskCell $w={50}><Terminal /><Mark /></TaskCell>
        <TaskCell $w={60}><Snip><SnipIcon /></Snip></TaskCell>
        <Tray>
          <TaskCell $w={40}><Ico w={14} h={8} sw={1.8} c="#222"><path d="m1 7 6-6 6 6" /></Ico></TaskCell>
          <TaskCell $w={40}>
            <Ico w={20} sw={1.3} c="#222">
              <path d="M.7 10.500a8.800 8.800 0 0 1 17-4.500M18.500.8v5.500H13M7 18.500c-3 0-4.500-2-6-4M1 19.500v-5.500h5.500" />
              <circle cx="15" cy="15" r="5" fill="#fb970c" stroke="none" />
            </Ico>
          </TaskCell>
          <TaskCell $w={40}>
            <Ico w={20} h={17} sw={1.3} c="#222">
              <path d="M5 14.500a4.300 4.300 0 0 1-.5-8.500 5.500 5.500 0 0 1 10.500 0 4.300 4.300 0 0 1 0 8.500z" fill="#b8bcc5" />
              <path d="m2 1 16 15.500" strokeWidth="1.600" />
            </Ico>
          </TaskCell>
          <Stack $align="center" $w={56} $ls={-0.2}><span>POR</span><span>PTB2</span></Stack>
          <TaskCell $w={38}>
            <Ico w={20} h={16} sw={1.5} c="#222">
              <path d="M.7 5.500a13 13 0 0 1 18.600 0M3.500 8.500a9 9 0 0 1 13 0M6.300 11.300a5.300 5.300 0 0 1 7.400 0" />
              <circle cx="10" cy="14" r="1.500" fill="#222" stroke="none" />
            </Ico>
          </TaskCell>
          <TaskCell $w={20}>
            <Ico w={19} h={14} sw={1.2} c="#222"><path d="M.7 4.500h3.500L8.500.8v12.400L4.200 9.500H.7zM12 4l6.500 6.500M18.500 4 12 10.500" /></Ico>
          </TaskCell>
          <TaskCell $w={40}>
            <Ico w={20} h={12} sw={1.4} c="#222">
              <rect x=".7" y=".7" width="16.600" height="10.600" rx="2.500" /><rect x="3" y="3" width="10" height="6" fill="#222" stroke="none" /><path d="M18.800 4v4" strokeWidth="2" />
            </Ico>
          </TaskCell>
          <Stack $align="right" $w={89} $ls={0.05}><span>08:49</span><span>13/03/2024</span></Stack>
          <TaskCell $w={38}>
            <svg width="17" height="20" viewBox="0 0 17 20" fill="#063f96"><path d="M8.500 0c4 0 6.500 3 6.500 6.500V11l2 4v1H0v-1l2-4V6.500C2 3 4.500 0 8.500 0zM5.500 17h6c-.5 1.500-1.500 2.200-3 2.200s-2.500-.7-3-2.200z" /></svg>
          </TaskCell>
        </Tray>
      </Taskbar>
    </Desktop>
  );
}
